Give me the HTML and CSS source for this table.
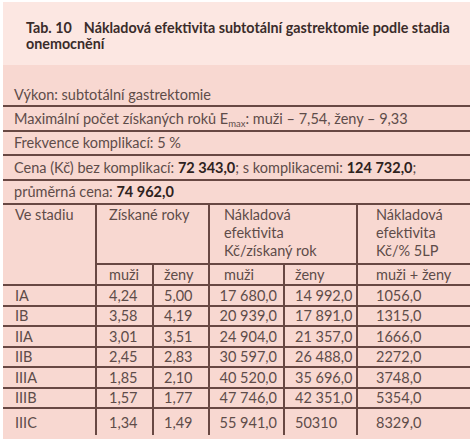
FILE: index.html
```html
<!DOCTYPE html>
<html lang="cs">
<head>
	<meta charset="UTF-8">
	<title>Tab. 10</title>
	<link rel="stylesheet" href="styles.css">
</head>
<body>
    <div class="panel">
        <div class="caption">
            <span class="tab-no">Tab. 10</span>Nákladová efektivita subtotální gastrektomie podle stadia onemocnění
        </div>
        <div class="body">
            <table class="data">
                <colgroup>
                    <col class="c1">
                    <col class="c2">
                    <col class="c3">
                    <col class="c4">
                    <col class="c5">
                    <col class="c6">
                </colgroup>
                <tr class="info first"><td colspan="6">Výkon: subtotální gastrektomie</td></tr>
                <tr class="info"><td colspan="6">Maximální počet získaných roků E<sub>max</sub>: muži – 7,54, ženy – 9,33</td></tr>
                <tr class="info"><td colspan="6">Frekvence komplikací: 5 %</td></tr>
                <tr class="info"><td colspan="6">Cena (Kč) bez komplikací: <b>72 343,0</b>; s komplikacemi: <b>124 732,0</b>;</td></tr>
                <tr class="info"><td colspan="6">průměrná cena: <b>74 962,0</b></td></tr>
                <tr class="head">
                    <td rowspan="2" class="stage">Ve stadiu</td>
                    <td colspan="2" class="p12">Získané roky</td>
                    <td colspan="2" class="p14">Nákladová<br>efektivita<br>Kč/získaný rok</td>
                    <td class="p18">Nákladová<br>efektivita<br>Kč/% 5LP</td>
                </tr>
                <tr class="sub">
                    <td class="p12">muži</td>
                    <td>ženy</td>
                    <td class="p14">muži</td>
                    <td>ženy</td>
                    <td class="p18">muži + ženy</td>
                </tr>
                <tr class="row"><td class="stage">IA</td><td class="p12">4,24</td><td>5,00</td><td class="num">17 680,0</td><td>14 992,0</td><td class="p18">1056,0</td></tr>
                <tr class="row"><td class="stage">IB</td><td class="p12">3,58</td><td>4,19</td><td class="num">20 939,0</td><td>17 891,0</td><td class="p18">1315,0</td></tr>
                <tr class="row"><td class="stage">IIA</td><td class="p12">3,01</td><td>3,51</td><td class="num">24 904,0</td><td>21 357,0</td><td class="p18">1666,0</td></tr>
                <tr class="row"><td class="stage">IIB</td><td class="p12">2,45</td><td>2,83</td><td class="num">30 597,0</td><td>26 488,0</td><td class="p18">2272,0</td></tr>
                <tr class="row"><td class="stage">IIIA</td><td class="p12">1,85</td><td>2,10</td><td class="num">40 520,0</td><td>35 696,0</td><td class="p18">3748,0</td></tr>
                <tr class="row"><td class="stage">IIIB</td><td class="p12">1,57</td><td>1,77</td><td class="num">47 746,0</td><td>42 351,0</td><td class="p18">5354,0</td></tr>
                <tr class="row last"><td class="stage">IIIC</td><td class="p12">1,34</td><td>1,49</td><td class="num">55 941,0</td><td>50310</td><td class="p18">8329,0</td></tr>
            </table>
        </div>
    </div>
</body>
</html>
```

FILE: styles.css
```css
body {
    margin: 0;
    background: #fff;
    font-family: Lato, "Liberation Sans", sans-serif;
}

.panel {
    width: 467px;
    margin: 2px 0 0 3px;
}

.caption {
    background: #fce7e2;
    height: 63px;
    box-sizing: border-box;
    padding: 18px 16px 0 23px;
    font-size: 14.3px;
    line-height: 16px;
    font-weight: bold;
    color: #3a2c2a;
}

.tab-no {
    margin-right: 12px;
}

.body {
    background: #f8d8d1;
    padding: 19px 0 4px;
}

.data {
    width: 467px;
    table-layout: fixed;
    border-collapse: collapse;
    font-size: 14.5px;
    line-height: 17px;
    color: #5e4c49;
}

.c1 { width: 93px; }
.c2 { width: 57px; }
.c3 { width: 56px; }
.c4 { width: 75px; }
.c5 { width: 73px; }
.c6 { width: 113px; }

.data td {
    padding: 0 0 0 10px;
    border: 2px solid #684843;
    border-top: 0;
    white-space: nowrap;
    vertical-align: middle;
}

.data td:first-child {
    border-left: 0;
}

.data td:last-child {
    border-right: 0;
}

.info td {
    height: 22.5px;
    padding-left: 11px;
}

.info.first td {
    height: 21px;
}

.info b {
    color: #2e2220;
}

.info sub {
    font-size: 9.5px;
    vertical-align: -3px;
    line-height: 0;
}

.head td {
    height: 57px;
    vertical-align: top;
    line-height: 18px;
    padding-top: 1px;
}

.sub td {
    height: 19px;
}

.row td {
    height: 18.5px;
}

.row.last td {
    height: 26px;
    border-bottom: 0;
}

.data td.stage {
    padding-left: 12px;
}

.data td.p12 { padding-left: 12px; }
.data td.p14 { padding-left: 14px; }
.data td.p18 { padding-left: 18px; }

.data td.num {
    text-align: right;
    padding: 0 6px 0 0;
}
```
